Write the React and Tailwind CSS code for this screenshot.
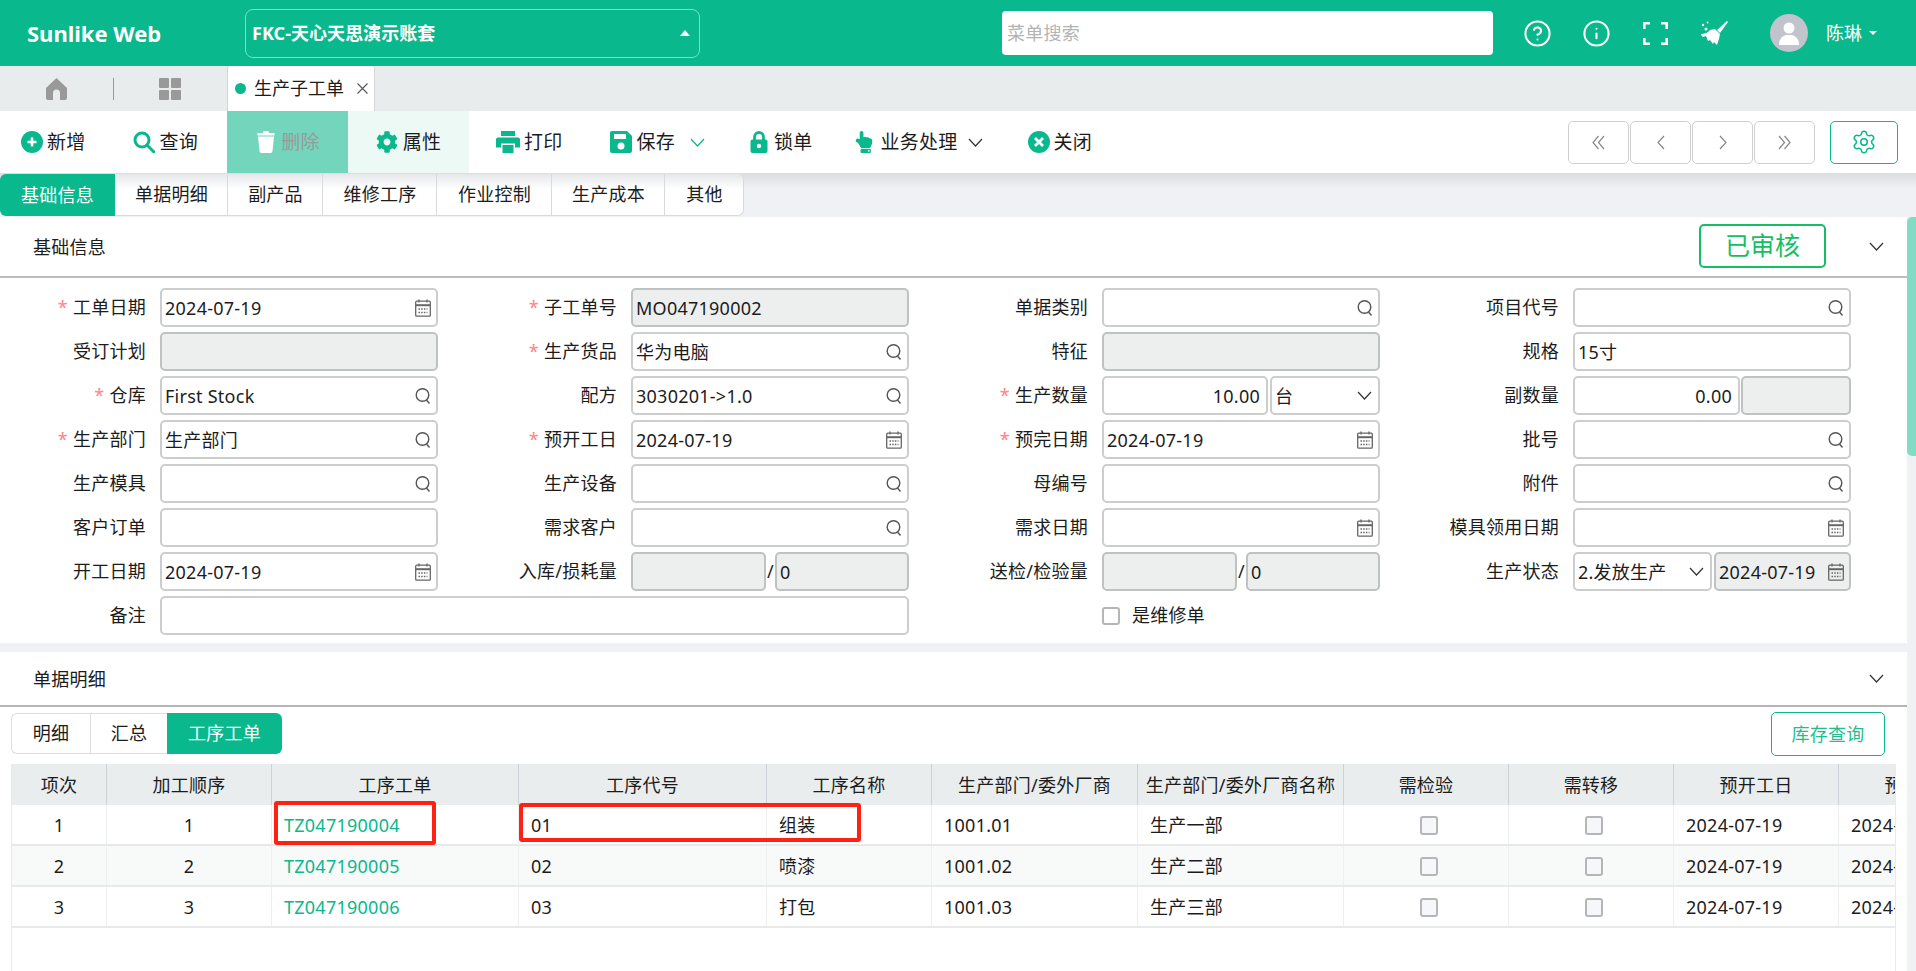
import React from 'react';
import { FaCog, FaHandPointUp } from 'react-icons/fa';
import { CircleHelp, Info, Settings } from 'lucide-react';

const G = '#09b88c';

const Chevron = ({ className = '', color = '#333', w = 15, h = 9 }) => (
  <svg width={w} height={h} viewBox="0 0 15 9" className={className} fill="none" stroke={color} strokeWidth="1.2"><path d="M1 1l6.5 7L14 1" /></svg>
);
const SearchI = () => (
  <svg width="16" height="18" viewBox="0 0 16 18" fill="none" stroke="#555" strokeWidth="1.4"><circle cx="7.5" cy="8" r="6.3" /><path d="M11.5 13l3 3.5" /></svg>
);
const Cal = () => (
  <svg width="16" height="18" viewBox="0 0 16 18" fill="none" stroke="#666" strokeWidth="1.3"><rect x="0.7" y="2.2" width="14.6" height="15" rx="1" /><path d="M0.7 6.2h14.6" strokeWidth="2" /><path d="M4 0.5v3M12 0.5v3" /><path d="M3.5 10h9M3.5 13.5h9" strokeDasharray="1.5 1.2" /></svg>
);
const Plus = () => (
  <svg width="22" height="22" viewBox="0 0 22 22"><circle cx="11" cy="11" r="11" fill={G} /><path d="M11 6.5v9M6.5 11h9" stroke="#fff" strokeWidth="2.6" /></svg>
);
const Mag = () => (
  <svg width="22" height="22" viewBox="0 0 22 22" fill="none" stroke={G} strokeWidth="3"><circle cx="9" cy="9" r="7" /><path d="M14 14l7 7" strokeLinecap="round" /></svg>
);
const Trash = () => (
  <svg width="18" height="22" viewBox="0 0 18 22" fill="#fff"><path d="M6.5 0h5l.5 2h5.5v2.5H.5V2H6z" /><path d="M1 5.5h16L15.5 20a2 2 0 0 1-2 2h-9a2 2 0 0 1-2-2z" /></svg>
);
const Printer = () => (
  <svg width="24" height="22" viewBox="0 0 24 22" fill={G}><path d="M5 0h14v5H5z" /><path d="M2 6.5h20a2 2 0 0 1 2 2v8h-5v-4H5v4H0v-8a2 2 0 0 1 2-2z" /><path d="M6.5 14h11v8h-11z" /></svg>
);
const Save = () => (
  <svg width="22" height="22" viewBox="0 0 22 22"><path d="M2 0h15l5 5v15a2 2 0 0 1-2 2H2a2 2 0 0 1-2-2V2a2 2 0 0 1 2-2z" fill={G} /><rect x="4" y="3" width="12" height="5" fill="#fff" /><circle cx="11" cy="15" r="3.5" fill="#fff" /></svg>
);
const Lock = () => (
  <svg width="18" height="22" viewBox="0 0 18 22"><path d="M4.5 9V6a4.5 4.5 0 0 1 9 0v3" fill="none" stroke={G} strokeWidth="2.8" /><rect x="0.5" y="8.5" width="17" height="13.5" rx="2" fill={G} /><circle cx="9" cy="15" r="2.2" fill="#fff" /></svg>
);
const XC = () => (
  <svg width="22" height="22" viewBox="0 0 22 22"><circle cx="11" cy="11" r="11" fill={G} /><path d="M7 7l8 8M15 7l-8 8" stroke="#fff" strokeWidth="2.8" /></svg>
);
const Home = () => (
  <svg width="21" height="22" viewBox="0 0 21 22" fill="#999"><path d="M10.5 0L21 10v10a2 2 0 0 1-2 2h-5v-7a3.5 3.5 0 0 0-7 0v7H2a2 2 0 0 1-2-2V10z" /></svg>
);
const Tiles = () => (
  <svg width="22" height="22" viewBox="0 0 22 22" fill="#999"><rect width="10" height="10" rx="1" /><rect x="12" width="10" height="10" rx="1" /><rect y="12" width="10" height="10" rx="1" /><rect x="12" y="12" width="10" height="10" rx="1" /></svg>
);
const Full = () => (
  <svg width="25" height="23" viewBox="0 0 25 23" fill="none" stroke="#fff" strokeWidth="2.6"><path d="M1.3 7V1.3H7M18 1.3h5.7V7M23.7 16v5.7H18M7 21.7H1.3V16" /></svg>
);
const Broom = () => (
  <svg width="27" height="24" viewBox="0 0 27 24" fill="#fff"><path d="M26 0l1 1-8 11-3-3z" /><path d="M9 9l5-1 5 5-1 5-2 6-3-3-1 2-3-4-2 1-2-5-3 1-3-3c4 0 8-1 10-4z" /><circle cx="2" cy="4" r="1.2" /><circle cx="6.5" cy="1.5" r="0.9" /><circle cx="5" cy="8" r="1.5" /></svg>
);
const Double = ({ flip }) => (
  <svg width="13" height="15" viewBox="0 0 13 15" fill="none" stroke="#888" strokeWidth="1.2" className={flip ? 'rotate-180' : ''}><path d="M6.5 1L1 7.5 6.5 14M12 1L6.5 7.5 12 14" /></svg>
);
const Single = ({ flip }) => (
  <svg width="8" height="15" viewBox="0 0 8 15" fill="none" stroke="#888" strokeWidth="1.2" className={flip ? 'rotate-180' : ''}><path d="M7 1L1 7.5 7 14" /></svg>
);

const inputBase = 'h-[39px] border-2 rounded-[5px] flex items-center pl-[3px] pr-[5px] text-[18px] whitespace-nowrap';
const Box = ({ children, icon, dis, right, className = 'w-[278px]' }) => (
  <div className={`${inputBase} ${dis ? 'bg-[#ecefee] border-[#bfc2c2]' : 'bg-white border-[#cccece]'} ${className}`}>
    <span className={`flex-1 min-w-0 pt-[1px] ${right ? 'text-right pr-[1px]' : ''}`}>{children}</span>
    {icon === 's' && <SearchI />}
    {icon === 'c' && <Cal />}
    {icon === 'v' && <Chevron className="mr-[1px]" />}
  </div>
);
const Field = ({ label, req, children }) => (
  <div className="flex items-center h-[39px]">
    <div className="w-[132px] text-right text-[18px] whitespace-nowrap">
      {req && <span className="text-[#ff8585] mr-[5px]">*</span>}
      {label}
    </div>
    <div className="ml-[14px] w-[278px] flex items-center">{children}</div>
  </div>
);

const gridCls = 'grid grid-cols-[95px_165px_247px_248px_165px_206px_206px_165px_165px_165px_165px] w-[2192px]';
const heads = ['项次', '加工顺序', '工序工单', '工序代号', '工序名称', '生产部门/委外厂商', '生产部门/委外厂商名称', '需检验', '需转移', '预开工日', '预完工日'];
const rows = [
  ['1', '1', 'TZ047190004', '01', '组装', '1001.01', '生产一部'],
  ['2', '2', 'TZ047190005', '02', '喷漆', '1001.02', '生产二部'],
  ['3', '3', 'TZ047190006', '03', '打包', '1001.03', '生产三部'],
];
const cellC = 'flex items-center justify-center pt-[2px] border-r border-[#eeeff0]';
const cellL = 'flex items-center pl-[12px] pt-[2px] border-r border-[#eeeff0] whitespace-nowrap';
const Chk = () => <span className="ml-[5px] w-[18px] h-[19px] border-2 border-[#b4b6b8] rounded-[3px] bg-[#f6f7fb]" />;

export default function App() {
  return (
    <div className="relative w-full h-screen overflow-hidden bg-[#eff1f5] text-[#1c1c1c] text-[18px] font-['Noto_Sans','Noto_Sans_CJK_SC',sans-serif] tracking-[0.25px]">
      {/* top bar */}
      <header className="h-[66px] bg-[#09b88c] flex items-center text-white">
        <div className="w-[245px] pl-[27px] text-[22px] font-bold tracking-normal">Sunlike Web</div>
        <div className="w-[455px] h-[49px] border border-[#7fdcc5] rounded-[8px] flex items-center pl-[6px] pr-[9px] font-bold text-[18px] tracking-[0.05px]">
          <span className="flex-1">FKC-天心天思演示账套</span>
          <span className="w-0 h-0 border-x-[5px] border-x-transparent border-b-[6px] border-b-white" />
        </div>
        <div className="ml-[302px] w-[491px] h-[44px] bg-white rounded-[4px] flex items-center pl-[5px] text-[#b4b4b4]">菜单搜索</div>
        <CircleHelp className="ml-[30px]" size={29} strokeWidth={1.7} />
        <Info className="ml-[30px]" size={29} strokeWidth={1.7} />
        <span className="ml-[32px] flex"><Full /></span>
        <span className="ml-[33px] flex"><Broom /></span>
        <div className="ml-[42px] w-[38px] h-[38px] rounded-full bg-[#c1c4cc] flex items-center justify-center">
          <svg width="22" height="24" viewBox="0 0 22 24" fill="#fff"><circle cx="11" cy="7" r="5.5" /><path d="M1 24c0-6 3-9 7-10h6c4 1 7 4 7 10z" /></svg>
        </div>
        <span className="ml-[18px] tracking-normal">陈琳</span>
        <span className="ml-[7px] w-0 h-0 border-x-[4px] border-x-transparent border-t-[4px] border-t-white" />
      </header>

      {/* tab row */}
      <div className="h-[45px] bg-[#e9ecec] flex items-center">
        <span className="ml-[46px] flex"><Home /></span>
        <span className="ml-[46px] w-[1px] h-[22px] bg-[#999]" />
        <span className="ml-[45px] flex"><Tiles /></span>
        <div className="ml-[46px] w-[148px] h-full bg-white border-x border-[#d3d5d7] flex items-center pl-[7px] rounded-t-[3px]">
          <span className="w-[11px] h-[11px] rounded-full bg-[#09b88c]" />
          <span className="ml-[8px] tracking-normal">生产子工单</span>
          <svg className="ml-[13px]" width="11" height="11" viewBox="0 0 11 11" stroke="#555" strokeWidth="1.1"><path d="M0.5 0.5l10 10M10.5 0.5l-10 10" /></svg>
        </div>
      </div>

      {/* toolbar */}
      <div className="relative z-10 h-[62px] bg-white flex items-center text-[19px]">
        <button className="ml-[21px] flex items-center gap-[4px]"><Plus />新增</button>
        <button className="ml-[47px] flex items-center gap-[5px]"><Mag />查询</button>
        <button className="ml-[29px] w-[121px] h-full bg-[#73d5bb] text-[#9a9a9a] flex items-center justify-center gap-[6px] pl-[2px]"><Trash />删除</button>
        <button className="w-[121px] h-full bg-[#edf9f5] flex items-center justify-center gap-[5px]"><FaCog size={22} color={G} />属性</button>
        <button className="ml-[27px] flex items-center gap-[4px]"><Printer />打印</button>
        <button className="ml-[47px] flex items-center gap-[5px]"><Save />保存<Chevron className="ml-[10px]" color={G} /></button>
        <button className="ml-[45px] flex items-center gap-[6px]"><Lock />锁单</button>
        <button className="ml-[40px] flex items-center gap-[6px]"><FaHandPointUp size={22} color={G} />业务处理<Chevron className="ml-[4px]" /></button>
        <button className="ml-[45px] flex items-center gap-[4px]"><XC />关闭</button>
        <div className="ml-auto mr-[18px] flex items-center gap-[1px]">
          {[<Double />, <Single />, <Single flip />, <Double flip />].map((c, i) => (
            <button key={i} className="w-[61px] h-[43px] border border-[#cfcfcf] rounded-[5px] flex items-center justify-center">{c}</button>
          ))}
          <button className="ml-[14px] w-[68px] h-[43px] border border-[#09b88c] rounded-[5px] flex items-center justify-center"><Settings size={26} color={G} strokeWidth={1.4} /></button>
        </div>
      </div>

      {/* form tabs */}
      <div className="h-[44px] pt-[1px] bg-[linear-gradient(#dcdde1,#eff1f5_16px)] flex items-start">
        <div className="flex h-[42px]">
          <div className="w-[115px] rounded-l-[6px] bg-[#09b88c] text-white flex items-center justify-center">基础信息</div>
          {[['单据明细', 'w-[113px]'], ['副产品', 'w-[95px]'], ['维修工序', 'w-[114px]'], ['作业控制', 'w-[115px]'], ['生产成本', 'w-[113px]'], ['其他', 'w-[79px] rounded-r-[6px]']].map(([t, w]) => (
            <div key={t} className={`${w} pl-[1px] border-r border-b border-[#d8dade] bg-[linear-gradient(#e6e7ea,#fff_15px)] flex items-center justify-center`}>{t}</div>
          ))}
        </div>
      </div>

      {/* section 1 */}
      <section className="mr-[9px] bg-white h-[426px]">
        <div className="h-[61px] border-b-2 border-[#bdbdbd] flex items-center pl-[33px]">
          <span className="flex-1 pt-[2px]">基础信息</span>
          <div className="mr-[43px] mt-[-2px] w-[127px] h-[44px] border-2 border-[#14bf63] rounded-[5px] text-[#14bf63] text-[25px] tracking-normal flex items-center justify-center">已审核</div>
          <Chevron className="mr-[23px]" />
        </div>
        <div className="pt-[10px] pl-[14px] grid grid-cols-[repeat(4,471px)] gap-y-[5px]">
          <Field label="工单日期" req><Box icon="c">2024-07-19</Box></Field>
          <Field label="子工单号" req><Box dis>MO047190002</Box></Field>
          <Field label="单据类别"><Box icon="s" /></Field>
          <Field label="项目代号"><Box icon="s" /></Field>

          <Field label="受订计划"><Box dis /></Field>
          <Field label="生产货品" req><Box icon="s">华为电脑</Box></Field>
          <Field label="特征"><Box dis /></Field>
          <Field label="规格"><Box>15寸</Box></Field>

          <Field label="仓库" req><Box icon="s">First Stock</Box></Field>
          <Field label="配方"><Box icon="s">3030201-&gt;1.0</Box></Field>
          <Field label="生产数量" req>
            <Box right className="w-[166px]">10.00</Box>
            <Box icon="v" className="ml-[2px] w-[110px]">台</Box>
          </Field>
          <Field label="副数量">
            <Box right className="w-[167px]">0.00</Box>
            <Box dis className="ml-[1px] w-[110px]" />
          </Field>

          <Field label="生产部门" req><Box icon="s">生产部门</Box></Field>
          <Field label="预开工日" req><Box icon="c">2024-07-19</Box></Field>
          <Field label="预完日期" req><Box icon="c">2024-07-19</Box></Field>
          <Field label="批号"><Box icon="s" /></Field>

          <Field label="生产模具"><Box icon="s" /></Field>
          <Field label="生产设备"><Box icon="s" /></Field>
          <Field label="母编号"><Box /></Field>
          <Field label="附件"><Box icon="s" /></Field>

          <Field label="客户订单"><Box /></Field>
          <Field label="需求客户"><Box icon="s" /></Field>
          <Field label="需求日期"><Box icon="c" /></Field>
          <Field label="模具领用日期"><Box icon="c" /></Field>

          <Field label="开工日期"><Box icon="c">2024-07-19</Box></Field>
          <Field label="入库/损耗量">
            <Box dis className="w-[135px]" />
            <span className="w-[9px] text-center">/</span>
            <Box dis className="w-[134px]">0</Box>
          </Field>
          <Field label="送检/检验量">
            <Box dis className="w-[135px]" />
            <span className="w-[9px] text-center">/</span>
            <Box dis className="w-[134px]">0</Box>
          </Field>
          <Field label="生产状态">
            <Box icon="v" className="w-[139px]">2.发放生产</Box>
            <Box dis icon="c" className="ml-[2px] w-[137px]">2024-07-19</Box>
          </Field>

          <div className="col-span-2 flex items-center h-[39px]">
            <div className="w-[132px] text-right">备注</div>
            <div className="ml-[14px] w-[749px] h-[39px] bg-white border-2 border-[#cccece] rounded-[5px]" />
          </div>
          <div className="col-span-2 flex items-center h-[39px]">
            <span className="ml-[146px] w-[18px] h-[18px] border-2 border-[#b4b6b8] rounded-[3px] bg-white" />
            <span className="ml-[12px]">是维修单</span>
          </div>
        </div>
      </section>

      {/* section 2 */}
      <section className="mt-[9px] mr-[9px] bg-white h-[319px] flex flex-col">
        <div className="h-[55px] shrink-0 border-b-2 border-[#b5b5b5] flex items-center pl-[33px]">
          <span className="flex-1 pt-[1px]">单据明细</span>
          <Chevron className="mr-[23px]" />
        </div>
        <div className="shrink-0 pl-[11px] pr-[22px] pt-[5px] flex items-start h-[57px]">
          <div className="mt-[1px] flex h-[41px]">
            <div className="w-[79px] border border-r-0 border-[#dcdee0] rounded-l-[6px] flex items-center justify-center">明细</div>
            <div className="w-[77px] border border-r-0 border-[#dcdee0] flex items-center justify-center">汇总</div>
            <div className="w-[115px] bg-[#09b88c] text-white rounded-r-[6px] flex items-center justify-center">工序工单</div>
          </div>
          <div className="ml-auto w-[114px] h-[44px] border border-[#09b88c] rounded-[5px] text-[#1cc08f] flex items-center justify-center">库存查询</div>
        </div>
        <div className="relative ml-[11px] w-[1885px] flex-1 border-x border-[#e9ebeb] overflow-hidden">
          <div className={`${gridCls} h-[41px] bg-[#e9eded]`}>
            {heads.map((h, i) => (
              <div key={i} className="flex items-center justify-center pt-[1px] whitespace-nowrap border-r border-[#cdd1d8]">{h}</div>
            ))}
          </div>
          {rows.map((r, k) => (
            <div key={k} className={`${gridCls} h-[41px] border-b-2 border-[#e8eaea] ${k === 1 ? 'bg-[#f8f9f9]' : 'bg-white'}`}>
              <div className={cellC}>{r[0]}</div>
              <div className={cellC}>{r[1]}</div>
              <div className={`${cellL} text-[#09b88c]`}>{r[2]}</div>
              <div className={cellL}>{r[3]}</div>
              <div className={cellL}>{r[4]}</div>
              <div className={cellL}>{r[5]}</div>
              <div className={cellL}>{r[6]}</div>
              <div className={cellC}><Chk /></div>
              <div className={cellC}><Chk /></div>
              <div className={cellL}>2024-07-19</div>
              <div className={cellL}>2024-07-19</div>
            </div>
          ))}
          <div className="absolute left-[262px] top-[37px] w-[162px] h-[44px] border-[4px] border-[#ff2114] rounded-[3px]" />
          <div className="absolute left-[507px] top-[39px] w-[342px] h-[39px] border-[4px] border-[#ff2114] rounded-[3px]" />
        </div>
      </section>

      {/* scrollbar */}
      <div className="absolute right-0 top-[217px] w-[9px] h-[239px] bg-[#82dbc3] rounded-l-[5px]" />
    </div>
  );
}
